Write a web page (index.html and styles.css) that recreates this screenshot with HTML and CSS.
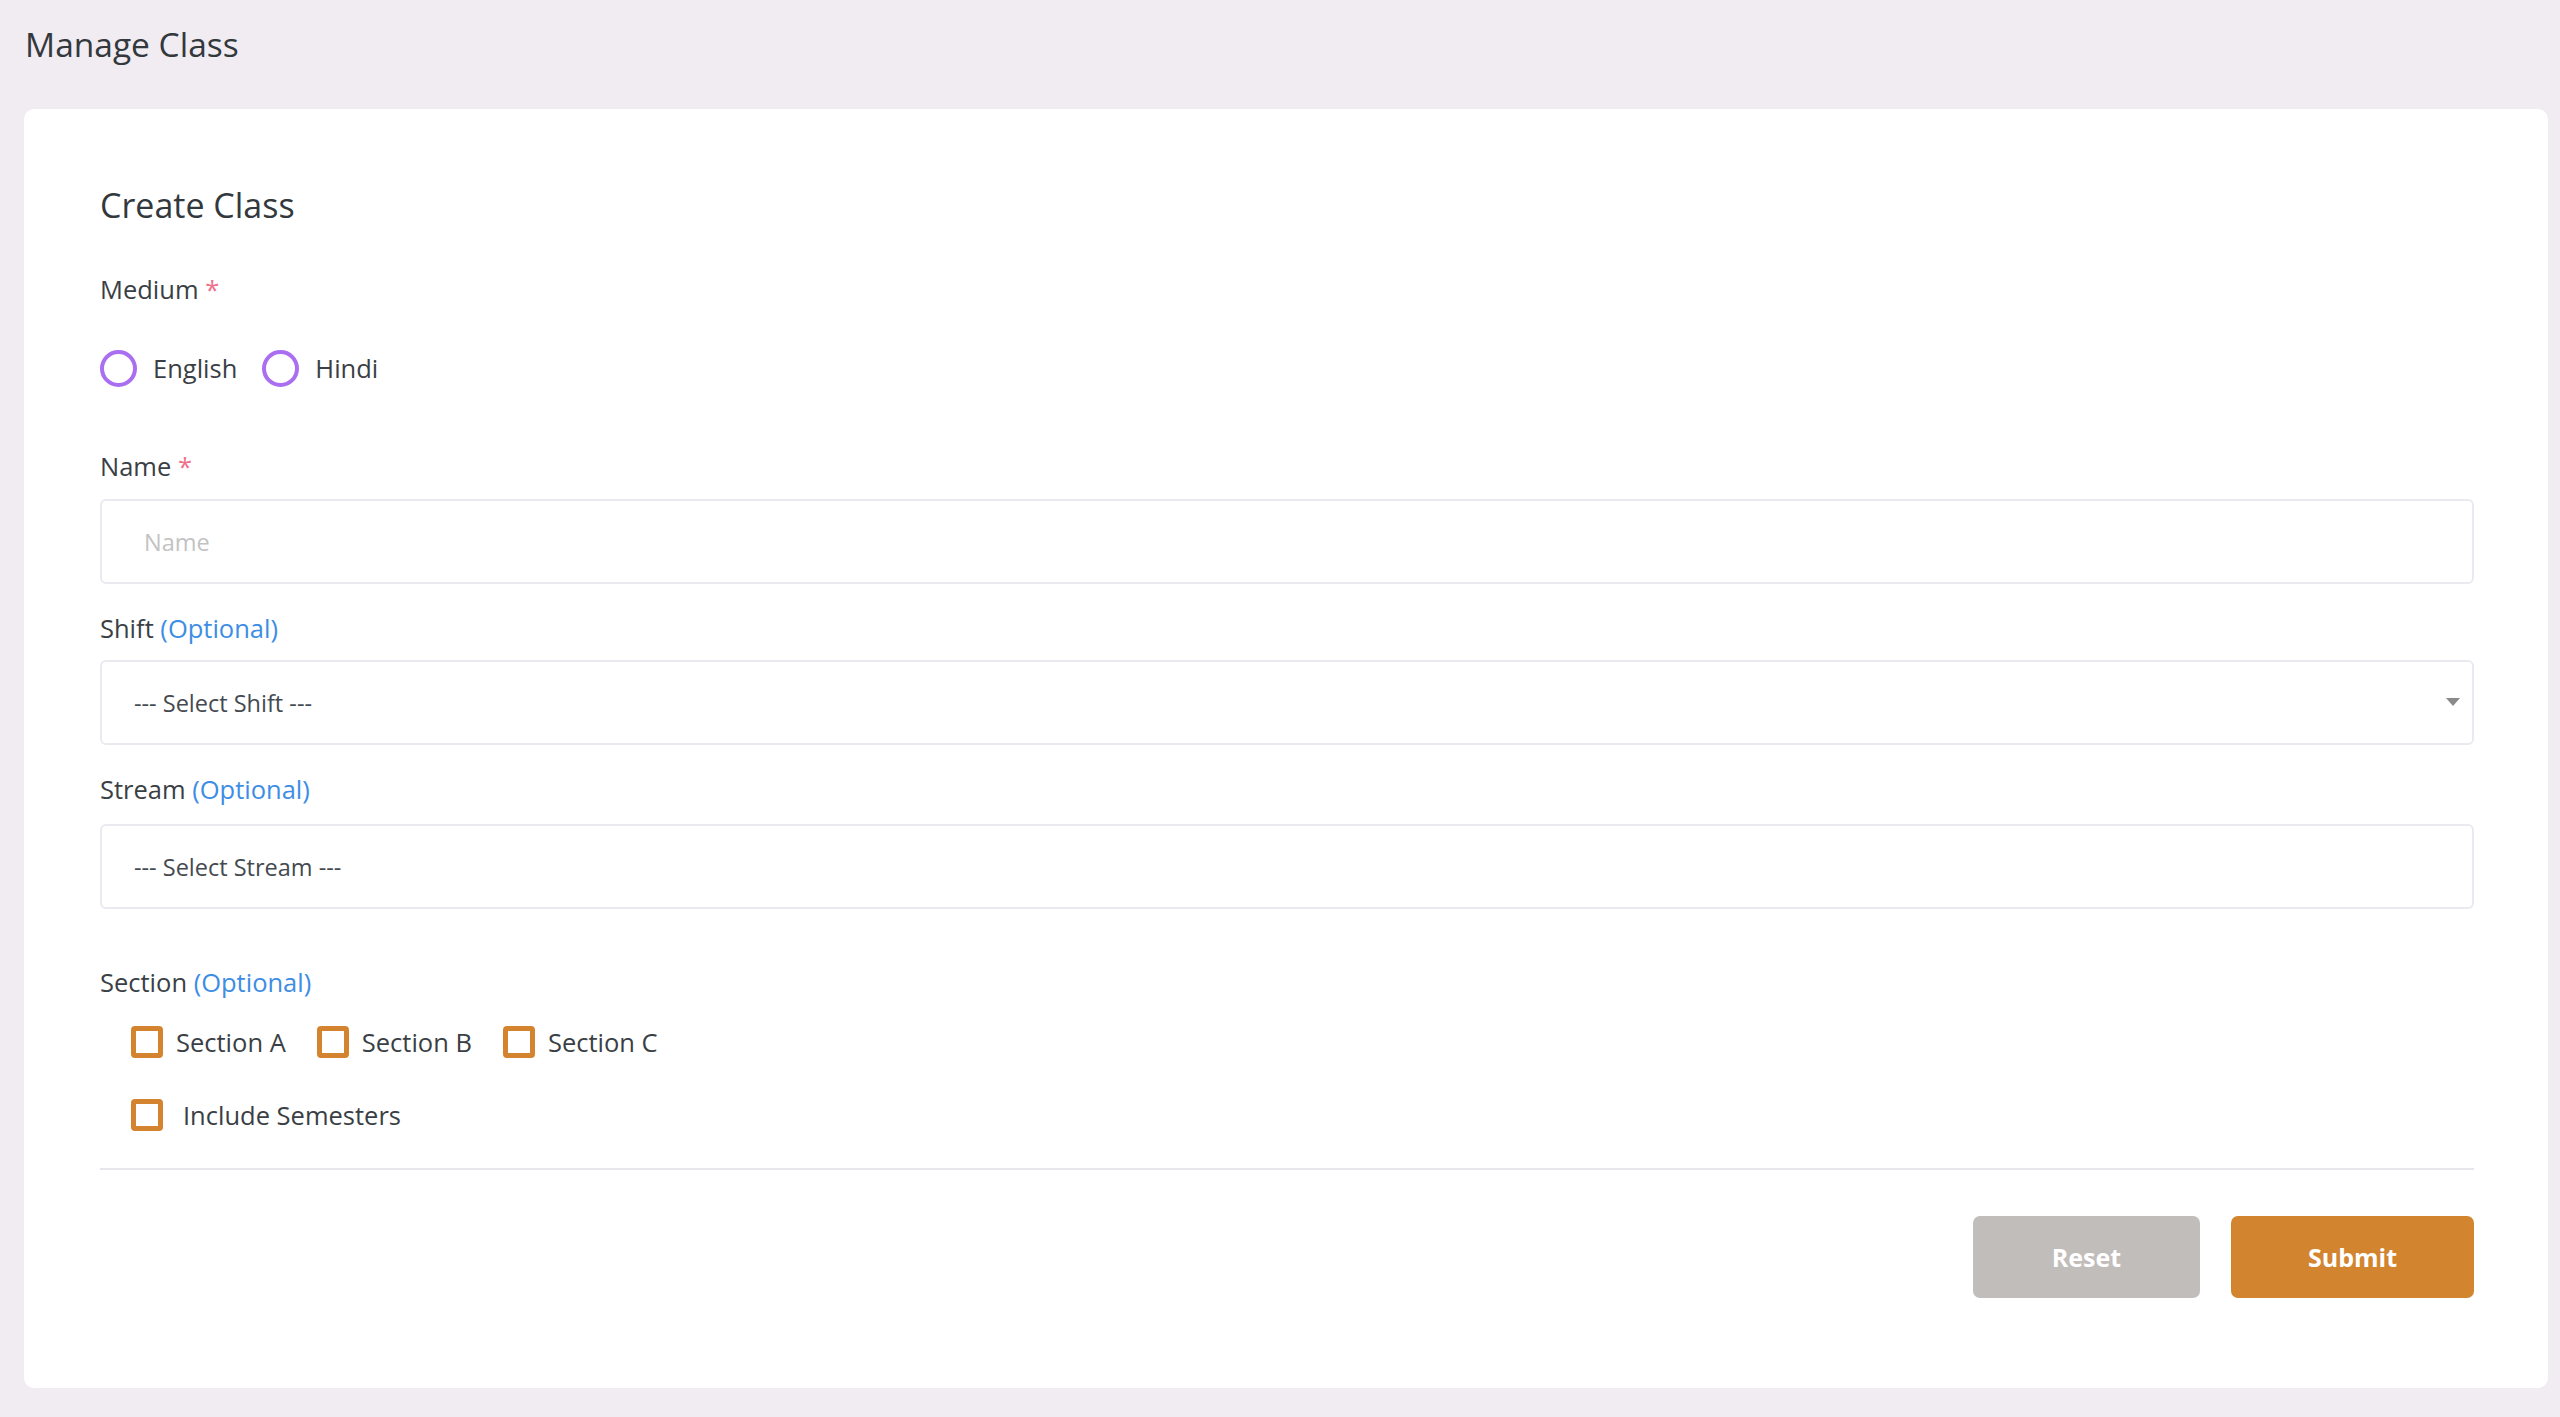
FILE: index.html
```html
<!DOCTYPE html>
<html lang="en">
<head>
<meta charset="utf-8">
<title>Manage Class</title>
<link rel="stylesheet" href="styles.css">
</head>
<body>
<div class="page">
  <h1 class="page-title">Manage Class</h1>
  <div class="card">
    <h2 class="card-title">Create Class</h2>
    <form class="form">
      <div class="field medium">
        <div class="label">Medium <span class="req">*</span></div>
        <div class="radios">
          <label class="radio"><input type="radio" name="medium"><span>English</span></label>
          <label class="radio"><input type="radio" name="medium"><span>Hindi</span></label>
        </div>
      </div>

      <div class="field name">
        <div class="label">Name <span class="req">*</span></div>
        <input class="control input" type="text" placeholder="Name">
      </div>

      <div class="field shift">
        <div class="label">Shift <span class="opt">(Optional)</span></div>
        <div class="select-wrap">
          <div class="control select">--- Select Shift ---</div>
          <svg class="caret" width="14" height="8" viewBox="0 0 14 8"><path d="M0 0H14L7 8Z" fill="#8a8a8a"/></svg>
        </div>
      </div>

      <div class="field stream">
        <div class="label">Stream <span class="opt">(Optional)</span></div>
        <div class="control select">--- Select Stream ---</div>
      </div>

      <div class="field section">
        <div class="label">Section <span class="opt">(Optional)</span></div>
        <div class="checks">
          <label class="check"><input type="checkbox"><span>Section A</span></label>
          <label class="check"><input type="checkbox"><span>Section B</span></label>
          <label class="check"><input type="checkbox"><span>Section C</span></label>
        </div>
        <div class="checks semesters">
          <label class="check wide"><input type="checkbox"><span>Include Semesters</span></label>
        </div>
      </div>

      <hr class="divider">

      <div class="actions">
        <button type="button" class="btn btn-reset">Reset</button>
        <button type="button" class="btn btn-submit">Submit</button>
      </div>
    </form>
  </div>
</div>
</body>
</html>
```

FILE: styles.css
```css
* { box-sizing: border-box; }

html, body {
  margin: 0;
  padding: 0;
}

body {
  background: #f0ecf2;
  font-family: "Open Sans", "Noto Sans", "Liberation Sans", sans-serif;
  color: #363b41;
}

.page {
  padding: 24px 12px 29px 24px;
}

.page-title {
  margin: 0 0 45px 1px;
  font-size: 33.5px;
  line-height: 40px;
  font-weight: 500;
  color: #33383d;
}

.card {
  background: #ffffff;
  border-radius: 10px;
  padding: 77px 74px 90px 76px;
}

.card-title {
  margin: 0;
  font-size: 34px;
  line-height: 38px;
  font-weight: 500;
  color: #33383d;
}

.form {
  display: flex;
  flex-direction: column;
}

.label {
  font-size: 25.5px;
  line-height: 32px;
  color: #3a3f45;
}

.req { color: #f0708a; }
.opt { color: #3d8de4; }

.field.medium { margin-top: 49px; }
.field.name { margin-top: 63px; }
.field.shift { margin-top: 28px; }
.field.stream { margin-top: 28px; }
.field.section { margin-top: 57px; }

.radios {
  display: flex;
  gap: 25px;
  margin-top: 45px;
}

.radio {
  display: flex;
  align-items: center;
  gap: 16px;
  font-size: 25.5px;
  line-height: 37px;
  color: #3a3f45;
}

.radio input {
  appearance: none;
  -webkit-appearance: none;
  margin: 0;
  width: 37px;
  height: 37px;
  border: 4px solid #a96ff0;
  border-radius: 50%;
  background: #fff;
}

.control {
  display: block;
  width: 100%;
  height: 85px;
  margin-top: 17px;
  border: 2px solid #ebe9f0;
  border-radius: 6px;
  background: #fff;
  font-family: inherit;
}

.input {
  padding: 0 0 0 42px;
  font-size: 23.5px;
  color: #333;
  outline: none;
}

.input::placeholder { color: #c3c3c3; }

.select {
  display: flex;
  align-items: center;
  padding-left: 32px;
  font-size: 23.5px;
  color: #444a50;
}

.select-wrap {
  position: relative;
  margin-top: 16px;
}

.select-wrap .control { margin-top: 0; }

.caret {
  position: absolute;
  right: 14px;
  top: 38px;
}

.field.stream .select { margin-top: 19px; }

.checks {
  display: flex;
  gap: 31px;
  margin-top: 28px;
  padding-left: 31px;
}

.checks.semesters { margin-top: 41px; }

.check {
  display: flex;
  align-items: center;
  gap: 13px;
  font-size: 25.5px;
  line-height: 32px;
  color: #3a3f45;
}

.check.wide { gap: 20px; }

.check input {
  appearance: none;
  -webkit-appearance: none;
  margin: 0;
  width: 32px;
  height: 32px;
  border: 5px solid #d4832f;
  border-radius: 4px;
  background: #fff;
}

.divider {
  margin: 37px 0 0;
  border: 0;
  height: 2px;
  background: #e7e6ea;
}

.actions {
  display: flex;
  justify-content: flex-end;
  gap: 31px;
  margin-top: 46px;
}

.btn {
  height: 82px;
  border: 0;
  border-radius: 7px;
  font-family: inherit;
  font-size: 25px;
  font-weight: 700;
  color: #ffffff;
}

.btn-reset {
  width: 227px;
  background: #c1bdbb;
}

.btn-submit {
  width: 243px;
  background: #d3842f;
}
```
